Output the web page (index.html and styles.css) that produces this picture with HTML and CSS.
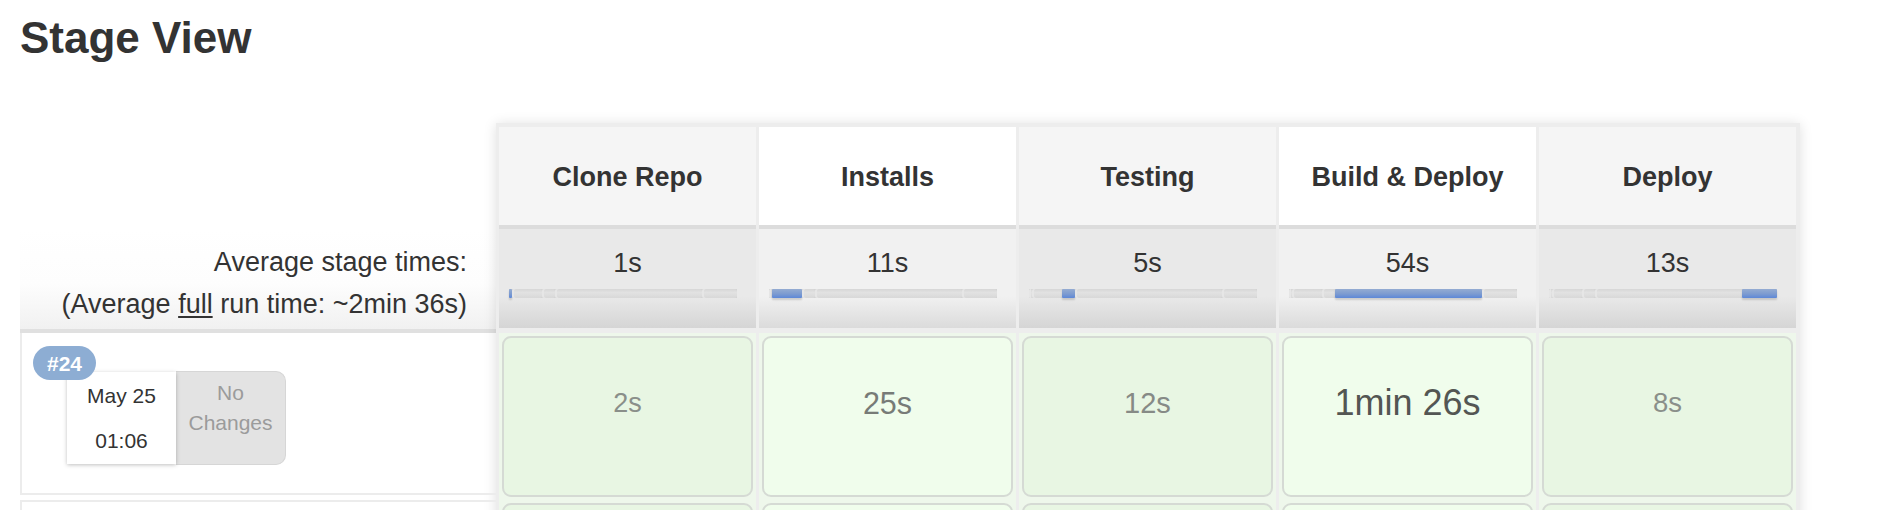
FILE: index.html
```html
<!DOCTYPE html>
<html lang="en">
<head>
<meta charset="utf-8">
<title>Stage View</title>
<link rel="stylesheet" href="styles.css">
</head>
<body>
<h1 class="title">Stage View</h1>
<div class="stage-view">
  <div class="runs">
    <div class="runs-spacer"></div>
    <div class="avg-label">
      <div>Average stage times:</div>
      <div>(Average <u>full</u> run time: ~2min 36s)</div>
    </div>
    <div class="run">
      <span class="run-badge">#24</span>
      <div class="run-time"><div>May 25</div><div>01:06</div></div>
      <div class="run-changes"><div>No</div><div>Changes</div></div>
    </div>
    <div class="run run-next"></div>
  </div>
  <div class="stages">
    <div class="stage-head">Clone Repo</div>
    <div class="stage-head even">Installs</div>
    <div class="stage-head">Testing</div>
    <div class="stage-head even">Build &amp; Deploy</div>
    <div class="stage-head">Deploy</div>

    <div class="stage-avg"><div>1s</div><div class="bar"><span class="seg on" style="flex-basis:1.19%"></span><span class="seg" style="flex-basis:13.1%"></span><span class="seg" style="flex-basis:5.95%"></span><span class="seg" style="flex-basis:64.28%"></span><span class="seg" style="flex-basis:15.48%"></span></div></div>
    <div class="stage-avg even"><div>11s</div><div class="bar"><span class="seg" style="flex-basis:1.19%"></span><span class="seg on" style="flex-basis:13.1%"></span><span class="seg" style="flex-basis:5.95%"></span><span class="seg" style="flex-basis:64.28%"></span><span class="seg" style="flex-basis:15.48%"></span></div></div>
    <div class="stage-avg"><div>5s</div><div class="bar"><span class="seg" style="flex-basis:1.19%"></span><span class="seg" style="flex-basis:13.1%"></span><span class="seg on" style="flex-basis:5.95%"></span><span class="seg" style="flex-basis:64.28%"></span><span class="seg" style="flex-basis:15.48%"></span></div></div>
    <div class="stage-avg even"><div>54s</div><div class="bar"><span class="seg" style="flex-basis:1.19%"></span><span class="seg" style="flex-basis:13.1%"></span><span class="seg" style="flex-basis:5.95%"></span><span class="seg on" style="flex-basis:64.28%"></span><span class="seg" style="flex-basis:15.48%"></span></div></div>
    <div class="stage-avg"><div>13s</div><div class="bar"><span class="seg" style="flex-basis:1.19%"></span><span class="seg" style="flex-basis:13.1%"></span><span class="seg" style="flex-basis:5.95%"></span><span class="seg" style="flex-basis:64.28%"></span><span class="seg on" style="flex-basis:15.48%"></span></div></div>

    <div class="stage-cell"><div class="cell-box"><span class="dur d-2">2s</span></div></div>
    <div class="stage-cell"><div class="cell-box even"><span class="dur d-25">25s</span></div></div>
    <div class="stage-cell"><div class="cell-box"><span class="dur d-12">12s</span></div></div>
    <div class="stage-cell"><div class="cell-box even"><span class="dur d-86">1min 26s</span></div></div>
    <div class="stage-cell"><div class="cell-box"><span class="dur d-8">8s</span></div></div>

    <div class="stage-cell"><div class="cell-box"></div></div>
    <div class="stage-cell"><div class="cell-box even"></div></div>
    <div class="stage-cell"><div class="cell-box"></div></div>
    <div class="stage-cell"><div class="cell-box even"></div></div>
    <div class="stage-cell"><div class="cell-box"></div></div>
  </div>
</div>
</body>
</html>
```
FILE: styles.css
```css
html, body {
  margin: 0;
  padding: 0;
  background: #fff;
}
body {
  padding: 0 20px;
  font-family: "Liberation Sans", Arial, Helvetica, sans-serif;
  color: #333;
  overflow: hidden;
}
.title {
  margin: 16px 0 0 0;
  font-size: 44px;
  line-height: 44px;
  font-weight: bold;
  color: #333;
}
.stage-view {
  display: flex;
  align-items: flex-start;
  margin-top: 63px;
}
.runs {
  width: 476px;
  flex: none;
}
.runs-spacer {
  height: 106px;
}
.avg-label {
  box-sizing: border-box;
  height: 104px;
  padding: 12px 29px 0 0;
  text-align: right;
  font-size: 27px;
  line-height: 42px;
  border-bottom: 4px solid #e0e0e0;
  background: linear-gradient(to bottom, #fff 0%, #fdfdfd 55%, #f1f1f1 100%);
}
.avg-label u {
  text-underline-offset: 3px;
}
.run {
  position: relative;
  box-sizing: border-box;
  height: 162px;
  border-left: 2px solid #ececec;
  border-bottom: 2px solid #ececec;
  padding: 39px 0 0 45px;
  display: flex;
  align-items: flex-start;
  margin-bottom: 5px;
}
.run-next {
  border-top: 2px solid #ececec;
}
.run-badge {
  position: absolute;
  left: 11px;
  top: 13px;
  z-index: 2;
  height: 34px;
  padding: 0 14px;
  border-radius: 17px;
  background: #8dadd3;
  color: #fff;
  font-weight: bold;
  font-size: 21px;
  line-height: 35px;
}
.run-time {
  position: relative;
  z-index: 1;
  width: 109px;
  height: 92px;
  box-sizing: border-box;
  padding-top: 1px;
  background: #fff;
  text-align: center;
  font-size: 21px;
  line-height: 45px;
  color: #333;
  box-shadow: 0 1px 4px rgba(0, 0, 0, 0.25);
}
.run-changes {
  width: 110px;
  height: 94px;
  box-sizing: border-box;
  margin-top: -1px;
  padding-top: 6px;
  background: #e3e3e3;
  border: 1px solid #d6d6d6;
  border-left: none;
  border-radius: 0 10px 10px 0;
  text-align: center;
  font-size: 21px;
  line-height: 30px;
  color: #9b9b9b;
}
.stages {
  display: grid;
  grid-template-columns: repeat(5, 257px);
  column-gap: 3px;
  padding: 4px 4px 0 3px;
  background: #ededed;
  box-shadow: 0 1px 12px rgba(0, 0, 0, 0.13);
}
.stage-head {
  box-sizing: border-box;
  height: 102px;
  padding-top: 3px;
  border-bottom: 4px solid #dcdcdc;
  background: #f5f5f5;
  display: flex;
  align-items: center;
  justify-content: center;
  font-weight: bold;
  font-size: 27px;
  color: #333;
}
.stage-head.even {
  background: #fff;
}
.stage-avg {
  box-sizing: border-box;
  height: 99px;
  margin-bottom: 5px;
  padding-top: 17px;
  text-align: center;
  font-size: 27px;
  line-height: 34px;
  color: #333;
  background: linear-gradient(to bottom, #e9e9e9 0%, #e9e9e9 68%, #d5d5d5 100%);
}
.stage-avg.even {
  background: linear-gradient(to bottom, #f1f1f1 0%, #f1f1f1 68%, #dbdbdb 100%);
}
.bar {
  display: flex;
  height: 9px;
  margin: 9px 19px 0 10px;
  background: #d2d2d2;
}
.seg {
  flex-grow: 0;
  flex-shrink: 0;
  height: 9px;
  border-radius: 2px;
  background: linear-gradient(to bottom, #d6d6d6 0%, #e2e2e2 40%, #d8d8d8 100%);
  box-shadow: inset 2px 0 0 #e6e6e6;
}
.seg.on {
  border-radius: 1px;
  background: linear-gradient(to bottom, #94acd2 0%, #7d9bd0 55%, #5d88d8 100%);
  box-shadow: 0 2px 2px rgba(0, 0, 0, 0.15);
}
.stage-cell {
  box-sizing: border-box;
  height: 167px;
  padding: 3px;
  background: #eef7eb;
}
.cell-box {
  box-sizing: border-box;
  height: 161px;
  padding-top: 35px;
  border: 2px solid #d5dad4;
  border-radius: 9px;
  background: #e8f6e3;
  text-align: center;
  line-height: 60px;
}
.cell-box.even {
  background: #f0fdec;
}
.dur {
  color: #888;
  font-size: 27px;
}
.d-2 { font-size: 27px; color: #8a8f8a; }
.d-8 { font-size: 27.5px; color: #8a8f8a; }
.d-12 { font-size: 29px; color: #868a86; }
.d-25 { font-size: 30.5px; color: #777b77; }
.d-86 { font-size: 36px; color: #535653; }
```
